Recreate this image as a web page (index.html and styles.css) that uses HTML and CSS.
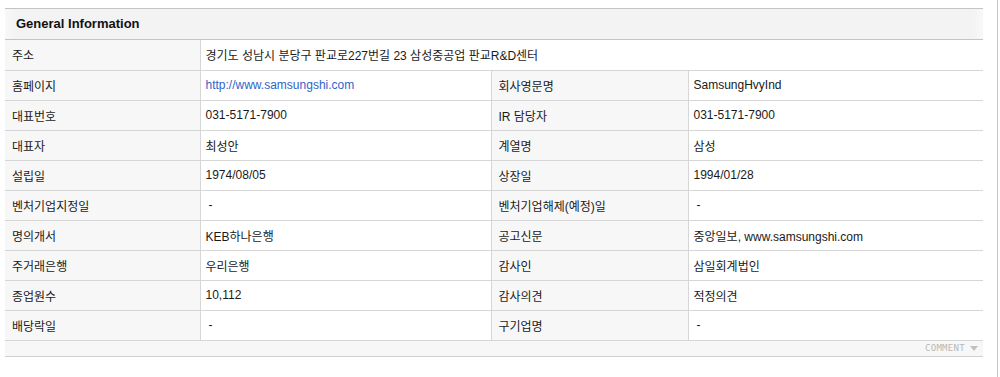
FILE: index.html
```html
<!DOCTYPE html>
<html lang="ko">
<head>
<meta charset="utf-8">
<title>General Information</title>
<link rel="stylesheet" href="styles.css">
</head>
<body>
<div class="page">
  <section class="panel">
    <h2 class="panel-title">General Information</h2>
    <table class="info">
      <colgroup>
        <col class="c1"><col class="c2"><col class="c3"><col class="c4">
      </colgroup>
      <tbody>
        <tr><th>주소</th><td colspan="3">경기도 성남시 분당구 판교로227번길 23 삼성중공업 판교R&amp;D센터</td></tr>
        <tr><th>홈페이지</th><td><a class="link" href="#">http://www.samsungshi.com</a></td><th>회사영문명</th><td>SamsungHvyInd</td></tr>
        <tr><th>대표번호</th><td>031-5171-7900</td><th>IR 담당자</th><td>031-5171-7900</td></tr>
        <tr><th>대표자</th><td>최성안</td><th>계열명</th><td>삼성</td></tr>
        <tr><th>설립일</th><td>1974/08/05</td><th>상장일</th><td>1994/01/28</td></tr>
        <tr><th>벤처기업지정일</th><td class="dash">-</td><th>벤처기업해제(예정)일</th><td class="dash">-</td></tr>
        <tr><th>명의개서</th><td>KEB하나은행</td><th>공고신문</th><td>중앙일보, www.samsungshi.com</td></tr>
        <tr><th>주거래은행</th><td>우리은행</td><th>감사인</th><td>삼일회계법인</td></tr>
        <tr><th>종업원수</th><td>10,112</td><th>감사의견</th><td>적정의견</td></tr>
        <tr><th>배당락일</th><td class="dash">-</td><th>구기업명</th><td class="dash">-</td></tr>
      </tbody>
    </table>
    <div class="panel-foot">
      <span class="comment">COMMENT</span>
      <span class="tri"></span>
    </div>
  </section>
  <div class="rail"></div>
</div>
</body>
</html>
```

FILE: styles.css
```css
* { box-sizing: border-box; }
html, body { margin: 0; padding: 0; background: #fff; }
body {
  font-family: "Liberation Sans", "Noto Sans CJK KR", sans-serif;
  font-size: 12px;
  color: #222;
}
.page {
  display: flex;
  height: 377px;
  padding-left: 5px;
}
.panel {
  width: 978px;
  margin-top: 8px;
}
.panel-title {
  margin: 0;
  height: 32px;
  border-top: 1px solid #c4c4c4;
  border-bottom: 1px solid #c4c4c4;
  background: linear-gradient(to right, #f8f8f8 0, #f3f3f3 12px, #f3f3f3 calc(100% - 12px), #f8f8f8 100%);
  font-size: 13px;
  font-weight: bold;
  line-height: 30px;
  padding-left: 11px;
  color: #111;
}
.info {
  width: 100%;
  border-collapse: collapse;
  table-layout: fixed;
}
.c1 { width: 195px; }
.c2 { width: 291px; }
.c3 { width: 197px; }
.c4 { width: 295px; }
.info th, .info td {
  height: 30px;
  padding: 0 0 0 5px;
  border-bottom: 1px solid #d6d6d6;
  text-align: left;
  font-weight: normal;
  white-space: nowrap;
  vertical-align: middle;
  color: #1a1a1a;
}
.info th {
  background: #f7f7f7;
  border-right: 1px solid #d6d6d6;
  padding-left: 7px;
}
.info td { border-right: 1px solid #d6d6d6; }
.info td:last-child { border-right: 0; }
.info td.dash { padding-left: 8px; }
.link { color: #3264c8; text-decoration: none; }
.panel-foot {
  height: 16px;
  background: #f7f7f7;
  border-bottom: 1px solid #d0d0d0;
  display: flex;
  justify-content: flex-end;
  align-items: center;
  gap: 5px;
  padding-right: 5px;
}
.comment {
  font-family: "DejaVu Sans Mono", monospace;
  font-size: 9px;
  letter-spacing: 0.3px;
  color: #b8b8b8;
  line-height: 1;
}
.tri {
  width: 0; height: 0;
  border-left: 4px solid transparent;
  border-right: 4px solid transparent;
  border-top: 5px solid #c0c0c0;
}
.rail {
  margin-left: 14px;
  width: 1px;
  background: #c8c8c8;
  height: 100%;
}
```
